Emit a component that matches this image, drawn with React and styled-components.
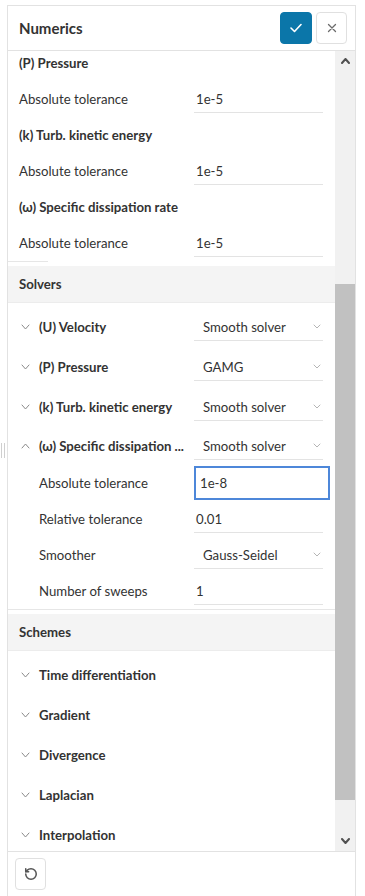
import React from "react";
import styled, { createGlobalStyle, css } from "styled-components";
import { RotateCcw } from "lucide-react";

const Global = createGlobalStyle`
  html, body { margin: 0; padding: 0; background: #fff; }
  body { font-family: Lato, "Open Sans", Arial, sans-serif; color: #333; -webkit-font-smoothing: antialiased; }
  * { box-sizing: border-box; }
`;

const FS = "13.2px";

const Page = styled.div`
  position: relative;
  height: 896px;
  padding: 5px 9px 0 7px;
  overflow: hidden;
`;

const Grip = styled.div`
  position: absolute;
  left: 1px;
  top: 443px;
  width: 4px;
  height: 15px;
  border-left: 1px solid #cfcfcf;
  border-right: 1px solid #cfcfcf;
`;

const Panel = styled.div`
  height: 100%;
  display: flex;
  flex-direction: column;
  border: 1px solid #e2e2e2;
  border-bottom: none;
  background: #fff;
`;

const Header = styled.div`
  flex: 0 0 45px;
  display: flex;
  align-items: center;
  gap: 4px;
  padding: 0 8px 0 11px;
  border-bottom: 1px solid #e2e2e2;
`;

const Title = styled.h1`
  flex: 1;
  margin: 0;
  font-size: 15px;
  font-weight: 700;
  color: #333;
`;

const IconButton = styled.button`
  width: ${p => p.$w || 32}px;
  height: 32px;
  padding: 0;
  display: flex;
  align-items: center;
  justify-content: center;
  border-radius: 4px;
  cursor: pointer;
  ${p => p.$primary ? css`
    background: #0b76a9;
    border: 1px solid #0b76a9;
  ` : css`
    background: #fff;
    border: 1px solid #e0e0e0;
  `}
`;

const Body = styled.div`
  flex: 1;
  min-height: 0;
  display: flex;
`;

const Content = styled.div`
  flex: 1;
  min-width: 0;
  overflow: hidden;
`;

const Scrolled = styled.div`
  margin-top: ${p => -p.$offset}px;
`;

const Scrollbar = styled.div`
  flex: 0 0 20px;
  display: flex;
  flex-direction: column;
  background: #f1f1f1;
`;

const ArrowBox = styled.div`
  flex: 0 0 ${p => p.$h}px;
  display: flex;
  align-items: center;
  justify-content: center;
`;

const Track = styled.div`
  flex: 1;
  display: flex;
  flex-direction: column;
`;

const Thumb = styled.div`
  background: #c1c1c1;
`;

const GroupTitle = styled.div`
  height: 36px;
  display: flex;
  align-items: center;
  padding-left: 11px;
  font-size: ${FS};
  font-weight: 700;
`;

const Row = styled.div`
  height: ${p => p.$h || 36}px;
  display: flex;
  align-items: center;
  padding-left: ${p => p.$indent || 11}px;
  padding-right: 12px;
`;

const Label = styled.div`
  flex: 1;
  min-width: 0;
  font-size: ${FS};
  font-weight: ${p => (p.$bold ? 700 : 400)};
  white-space: nowrap;
  padding-right: 4px;
`;

const Value = styled.div`
  flex: 0 0 129px;
  display: flex;
`;

const TextInput = styled.div`
  width: 100%;
  height: 28px;
  display: flex;
  align-items: center;
  padding-left: 2px;
  font-size: ${FS};
  border-bottom: 1px solid #e3e3e3;
  ${p => p.$focused && css`
    width: 136px;
    margin-right: -7px;
    height: 34px;
    padding-left: 4px;
    border: 2px solid #4d87d9;
  `}
`;

const Select = styled.div`
  width: 100%;
  height: 28px;
  display: flex;
  align-items: center;
  justify-content: space-between;
  padding: 0 2px 0 9px;
  font-size: ${FS};
  border-bottom: 1px solid #e3e3e3;
`;

const Toggle = styled.span`
  flex: 0 0 19px;
  display: flex;
  align-items: center;
  padding-left: 1px;
`;

const Rule = styled.div`
  width: ${p => p.$w};
  height: 1px;
  background: #e6e6e6;
`;

const SectionHeader = styled.div`
  margin-top: 4px;
  height: 37px;
  display: flex;
  align-items: center;
  padding-left: 11px;
  background: #f4f4f4;
  border-bottom: 1px solid #ececec;
  font-size: ${FS};
  font-weight: 700;
`;

const SectionBody = styled.div`
  padding-top: 4px;
`;

const Footer = styled.div`
  flex: 0 0 41px;
  border-top: 1px solid #e2e2e2;
  padding: 6px 7px;
`;

const Chevron = ({ up, w = 7, h = 4, color = "#8a8a8a", sw = 1 }) => (
  <svg width={w + 2} height={h + 2} viewBox={`-1 -1 ${w + 2} ${h + 2}`} fill="none">
    <polyline
      points={up ? `0,${h} ${w / 2},0 ${w},${h}` : `0,0 ${w / 2},${h} ${w},0`}
      stroke={color}
      strokeWidth={sw}
      strokeLinecap="round"
      strokeLinejoin="round"
    />
  </svg>
);

const SelectField = ({ value }) => (
  <Select>
    <span>{value}</span>
    <Chevron w={6} h={3} color="#b5b5b5" />
  </Select>
);

const Field = ({ label, value, select, focused, indent }) => (
  <Row $indent={indent}>
    <Label>{label}</Label>
    <Value>
      {select ? <SelectField value={value} /> : <TextInput $focused={focused}>{value}</TextInput>}
    </Value>
  </Row>
);

const SolverRow = ({ label, value, open, h }) => (
  <Row $indent={12} $h={h || 40}>
    <Toggle><Chevron up={open} /></Toggle>
    <Label $bold>{label}</Label>
    <Value><SelectField value={value} /></Value>
  </Row>
);

const SchemeRow = ({ label }) => (
  <Row $indent={12} $h={40}>
    <Toggle><Chevron /></Toggle>
    <Label $bold>{label}</Label>
  </Row>
);

export default function App() {
  return (
    <>
      <Global />
      <Page>
        <Grip />
        <Panel>
          <Header>
            <Title>Numerics</Title>
            <IconButton $primary>
              <svg width="12" height="10" viewBox="0 0 12 10" fill="none">
                <polyline points="1,5 4.5,8.5 11,1.5" stroke="#fff" strokeWidth="1.6" strokeLinecap="round" strokeLinejoin="round" />
              </svg>
            </IconButton>
            <IconButton $w={31}>
              <svg width="10" height="10" viewBox="0 0 10 10" fill="none">
                <path d="M1.5 1.5 L8.5 8.5 M8.5 1.5 L1.5 8.5" stroke="#6b6b6b" strokeWidth="1.3" strokeLinecap="round" />
              </svg>
            </IconButton>
          </Header>
          <Body>
            <Content>
              <Scrolled $offset={6}>
                <GroupTitle>(P) Pressure</GroupTitle>
                <Field label="Absolute tolerance" value="1e-5" />
                <GroupTitle>(k) Turb. kinetic energy</GroupTitle>
                <Field label="Absolute tolerance" value="1e-5" />
                <GroupTitle>(ω) Specific dissipation rate</GroupTitle>
                <Field label="Absolute tolerance" value="1e-5" />
                <Rule $w="40px" />
                <SectionHeader>Solvers</SectionHeader>
                <SectionBody>
                  <SolverRow label="(U) Velocity" value="Smooth solver" />
                  <SolverRow label="(P) Pressure" value="GAMG" />
                  <SolverRow label="(k) Turb. kinetic energy" value="Smooth solver" />
                  <SolverRow label="(ω) Specific dissipation ..." value="Smooth solver" open h={38} />
                  <Field indent={31} label="Absolute tolerance" value="1e-8" focused />
                  <Field indent={31} label="Relative tolerance" value="0.01" />
                  <Field indent={31} label="Smoother" value="Gauss-Seidel" select />
                  <Field indent={31} label="Number of sweeps" value="1" />
                </SectionBody>
                <Rule $w="100%" />
                <SectionHeader>Schemes</SectionHeader>
                <SectionBody>
                  <SchemeRow label="Time differentiation" />
                  <SchemeRow label="Gradient" />
                  <SchemeRow label="Divergence" />
                  <SchemeRow label="Laplacian" />
                  <SchemeRow label="Interpolation" />
                </SectionBody>
              </Scrolled>
            </Content>
            <Scrollbar>
              <ArrowBox $h={19}><Chevron up w={7} h={4} color="#505050" sw={2} /></ArrowBox>
              <Track>
                <div style={{ flex: "0 0 214px" }} />
                <Thumb style={{ flex: "0 0 516px" }} />
              </Track>
              <ArrowBox $h={20}><Chevron w={7} h={4} color="#505050" sw={2} /></ArrowBox>
            </Scrollbar>
          </Body>
          <Footer>
            <IconButton $w={31}>
              <RotateCcw size={14} color="#555" strokeWidth={2.6} />
            </IconButton>
          </Footer>
        </Panel>
      </Page>
    </>
  );
}
